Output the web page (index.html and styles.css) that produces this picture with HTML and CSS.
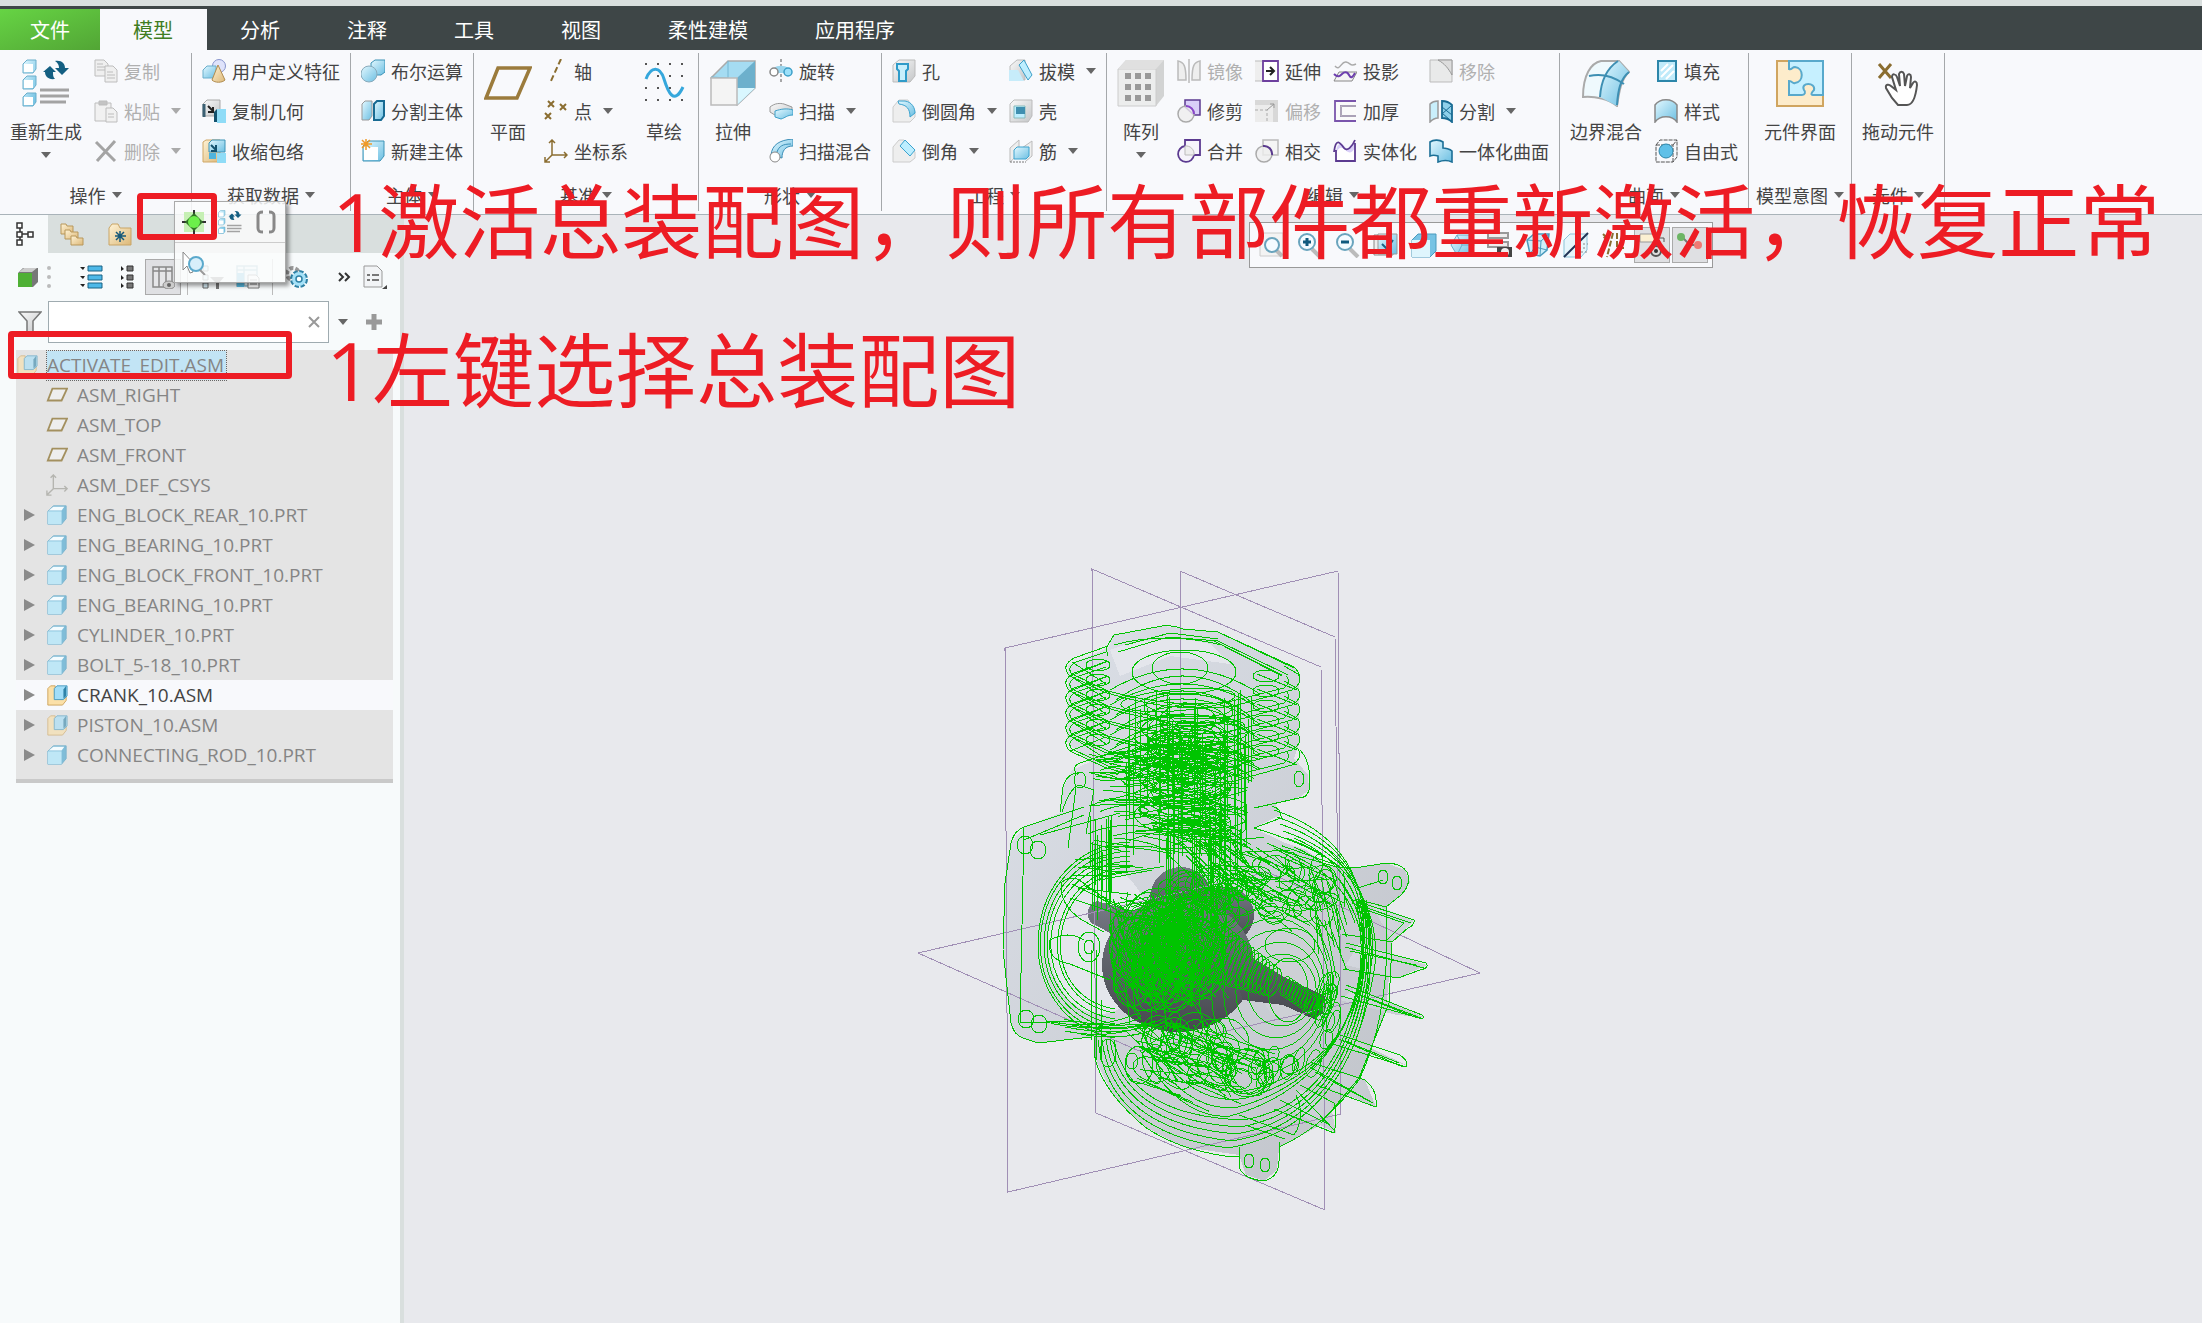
FILE: index.html
```html
<!DOCTYPE html>
<html lang="zh-CN">
<head>
<meta charset="utf-8">
<title>ACTIVATE_EDIT.ASM</title>
<link rel="stylesheet" href="styles.css">
</head>
<body>
<svg class="defs" aria-hidden="true">
<defs>
<linearGradient id="gb" x1="0" y1="0" x2="1" y2="1"><stop offset="0" stop-color="#e3f8ff"/><stop offset="1" stop-color="#6cbfe2"/></linearGradient>
<linearGradient id="gg" x1="0" y1="0" x2="1" y2="1"><stop offset="0" stop-color="#fafafa"/><stop offset="1" stop-color="#c4c6c8"/></linearGradient>
<linearGradient id="gy" x1="0" y1="0" x2="1" y2="1"><stop offset="0" stop-color="#fff3d6"/><stop offset="1" stop-color="#dcb878"/></linearGradient>
<linearGradient id="gm" x1="0" y1="0" x2="1" y2="1"><stop offset="0" stop-color="#dde1e9"/><stop offset="1" stop-color="#bfc2c8"/></linearGradient>
<linearGradient id="gk" x1="0" y1="0" x2="0" y2="1"><stop offset="0" stop-color="#777a86"/><stop offset="1" stop-color="#46484e"/></linearGradient>
</defs>
<symbol id="regen" viewBox="0 0 48 48"><g fill="url(#gb)" stroke="#6aaecb"><path d="M1 5l4-4h9v9l-3 4h-10zM1 21l4-4h9v9l-3 4h-10zM1 38l4-4h9v9l-3 4h-10z"/></g><g fill="#fff"><path d="M2 5h9v8h-9zM2 21h9v8h-9zM2 38h9v8h-9z"/></g><path d="M18 31h29M18 37h29M18 43h26" stroke="#a3a3a3" stroke-width="3"/><path d="M33 2c7-1 10 3 10 7h4l-7 7-7-7h4c0-3-1-5-4-7zM33 20c-7 1-10-3-10-7h-2l7-6 6 6h-3c0 3 0 5 2 7z" fill="#145f82"/></symbol>
<symbol id="copy" viewBox="0 0 24 24"><g fill="#efefef" stroke="#bdbdbd"><path d="M1 1h9l4 4v12h-13z"/><path d="M11 7h8l4 4v12h-12z"/></g><path d="M3 5h6M3 8h8M3 11h8M13 13h6M13 16h8M13 19h8" stroke="#bdbdbd"/></symbol>
<symbol id="paste" viewBox="0 0 24 24"><g fill="#f1f1f1" stroke="#bdbdbd"><path d="M1 4h16v18h-16z"/><path d="M5 2h8v4h-8z" fill="#c4c4c4"/><path d="M12 9h7l4 4v10h-11z"/></g><path d="M14 15h6M14 18h6" stroke="#bdbdbd"/></symbol>
<symbol id="del" viewBox="0 0 24 24"><path d="M2 3l19 19M21 2l-18 20" stroke="#a4a4a4" stroke-width="3"/></symbol>
<symbol id="udf" viewBox="0 0 24 24"><circle cx="17" cy="7" r="6.500" fill="#dfe3fb" stroke="#8794cc"/><path d="M1 11l4-4h9v10l-3 2h-10z" fill="url(#gb)" stroke="#6aaecb"/><path d="M16 6l7 15c-3 3-10 3-13 0z" fill="url(#gy)" stroke="#b08c50"/></symbol>
<symbol id="cgeo" viewBox="0 0 24 24"><path d="M1 5l4-4h13v12l-4 4h-13z" fill="url(#gg)" stroke="#aaa"/><path d="M2 5v13" stroke="#3b6073" stroke-width="3"/><path d="M6 7l5 5M11 8v5h-5" stroke="#222" fill="none" stroke-width="2"/><path d="M12 13l3-3v13h-3z" fill="#14526e"/><path d="M15 10h9v14h-9z" fill="#8fdcf7"/></symbol>
<symbol id="shrink" viewBox="0 0 24 24"><path d="M1 3l3-2h14v22h-17z" fill="url(#gy)" stroke="#cfa767"/><path d="M7 4l3-3h13v12h-16z" fill="url(#gb)" stroke="#3d93b6"/><path d="M9 6l5 5M14 6v6h-5" stroke="#14526e" fill="none" stroke-width="2"/><path d="M15 14h9v10h-9z" fill="#8fdcf7"/><path d="M7 14h7v6h-7z" fill="#4fb4dc"/></symbol>
<symbol id="bool" viewBox="0 0 24 24"><path d="M10 4l4-3h10v12l-4 3h-10z" fill="url(#gb)" stroke="#3d93b6"/><circle cx="8" cy="15" r="8" fill="url(#gb)" stroke="#8ab"/></symbol>
<symbol id="splitb" viewBox="0 0 24 24"><path d="M1 5l3-3h7v15l-3 4h-7z" fill="url(#gb)" stroke="#999"/><path d="M13 5l3-3h7v15l-3 4h-7z" fill="url(#gb)" stroke="#186a92" stroke-width="2"/></symbol>
<symbol id="newb" viewBox="0 0 24 24"><path d="M2 7l5-5h16v15l-4 5h-17z" fill="url(#gb)" stroke="#3d93b6"/><path d="M3 8h14v13h-14z" fill="#fff"/><path d="M5 0v11M0 5h11M1 1l8 8M9 1l-8 8" stroke="#f09a28" stroke-width="1.500"/></symbol>
<symbol id="plane" viewBox="0 0 48 48"><path d="M14 9h32l-13 30h-31z" fill="none" stroke="#9b7b3c" stroke-width="3.500"/></symbol>
<symbol id="axis" viewBox="0 0 24 24"><path d="M17 0l-11 24" stroke="#8a6d30" stroke-width="2" stroke-dasharray="6 3"/></symbol>
<symbol id="point" viewBox="0 0 24 24"><path d="M4 2l6 6M10 2l-6 6M16 5l6 6M22 5l-6 6M1 14l6 6M7 14l-6 6" stroke="#8a6d30" stroke-width="2"/></symbol>
<symbol id="csys" viewBox="0 0 24 24"><path d="M8 1v15h15M8 16l-7 7M5 4l3-3 3 3M20 13l3 3-3 3M1 18v5h5" fill="none" stroke="currentColor" stroke-width="1.500"/></symbol>
<symbol id="sketch" viewBox="0 0 48 48"><path d="M5 5h2M17 5h2M29 5h2M41 5h2M17 17h2M29 17h2M41 17h2M5 29h2M17 29h2M29 29h2M5 41h2M17 41h2M29 41h2M41 41h2" stroke="#555" stroke-width="2"/><path d="M6 20c5-13 14-13 18 0s10 27 19 8" fill="none" stroke="#35a7dc" stroke-width="3"/></symbol>
<symbol id="extrude" viewBox="0 0 48 48"><path d="M2 19l17-17h27v27l-18 17z" fill="#a5dcf2" stroke="#aaa" stroke-width="1.500"/><path d="M28 19l18-17v27l-18 17z" fill="#6db0cc"/><path d="M28 46l18-17h-18z" fill="#d9f7ff"/><path d="M19 2v17M19 19l-17-1" stroke="#75b6d2"/><path d="M2 19h26v27h-26z" fill="#f4f4f4" stroke="#bbb" stroke-width="1.500"/></symbol>
<symbol id="revolve" viewBox="0 0 24 24"><path d="M12 0v24" stroke="#555" stroke-dasharray="3 2"/><path d="M5 9c3-3 11-3 14 0v5h-14z" fill="#9bd6ee"/><circle cx="5" cy="13" r="4" fill="#fff" stroke="#888" stroke-width="1.500"/><circle cx="19" cy="13" r="4" fill="#9be0fa" stroke="#3c9fc8" stroke-width="1.500"/></symbol>
<symbol id="sweep" viewBox="0 0 24 24"><path d="M1 8c5-4 10-4 14-3l8 3v4c-7-1-9 1-9 4l-5 2-8-5z" fill="url(#gg)" stroke="#999"/><path d="M6 12c6-2 12-3 18-1v5c-6 0-8 3-12 4l-6-2z" fill="url(#gb)" stroke="#3c9fc8"/></symbol>
<symbol id="swblend" viewBox="0 0 24 24"><path d="M2 16c1-10 8-15 22-16v7c-8 0-11 5-11 12z" fill="url(#gb)" stroke="#3c8fb8"/><circle cx="6" cy="18" r="5" fill="#fff" stroke="#888"/><path d="M8 13c2-6 6-8 14-8" stroke="#3c8fb8" fill="none"/></symbol>
<symbol id="hole" viewBox="0 0 24 24"><path d="M1 6l6-5h16v16l-5 6h-17z" fill="url(#gg)" stroke="#bbb"/><path d="M5 5h11v5l-2 2v10h-7v-10l-2-2z" fill="#c8effc" stroke="#2f9bc9" stroke-width="2"/></symbol>
<symbol id="round" viewBox="0 0 24 24"><path d="M1 8l6-7h9l7 12v5l-5 5h-17z" fill="#eee" stroke="#ccc"/><path d="M6 2h7c7 1 10 7 10 12l-5 4c0-8-3-12-11-13z" fill="url(#gb)" stroke="#3ca3cf"/></symbol>
<symbol id="chamfer" viewBox="0 0 24 24"><path d="M1 8l6-7h5l11 12v6l-5 4h-17z" fill="#eee" stroke="#ccc"/><path d="M13 1l10 10-5 6-10-10z" fill="#bdeeff" stroke="#3ca3cf"/></symbol>
<symbol id="draft" viewBox="0 0 24 24"><path d="M1 7l7-6h8v20h-15z" fill="url(#gg)" stroke="#bbb"/><path d="M0 11h9l6 11h-15z" fill="#c7ecfa"/><path d="M15 1l8 15-4 5-9-15z" fill="#bdeeff" stroke="#3c9fc8"/></symbol>
<symbol id="shell" viewBox="0 0 24 24"><path d="M1 5l4-4h18v16l-4 6h-18z" fill="url(#gg)" stroke="#bbb"/><path d="M5 7h11v12h-11z" fill="#bdeeff" stroke="#8bb"/><path d="M7 8h9v7h-9z" fill="#3f8fb0"/></symbol>
<symbol id="rib" viewBox="0 0 24 24"><path d="M1 9l9-8v14l-9 8zM13 9l10-7v15l-6 5" fill="#eee" stroke="#bbb"/><path d="M5 11l3-3h12v9l-3 3h-12z" fill="url(#gb)" stroke="#3ca3cf"/><path d="M1 23h16" stroke="#777" stroke-dasharray="2 1"/></symbol>
<symbol id="pattern" viewBox="0 0 48 48"><path d="M1 10l8-9h38v36l-8 10h-38z" fill="#d2d3d3"/><path d="M1 10h38v37h-38z" fill="#eceded" stroke="#ccc"/><path d="M1 10l8-9h38l-8 9z" fill="#e0e0e0"/><g fill="#999"><path d="M8 14h6v6h-6zM18 14h6v6h-6zM28 14h6v6h-6zM8 25h6v6h-6zM18 25h6v6h-6zM28 25h6v6h-6zM8 36h6v6h-6zM18 36h6v6h-6zM28 36h6v6h-6z"/></g></symbol>
<symbol id="mirror" viewBox="0 0 24 24"><path d="M1 2c6 1 8 5 8 19h-8zM23 2c-6 1-8 5-8 19h8zM12 0v24" fill="#eee" stroke="#bbb" stroke-width="1.500"/></symbol>
<symbol id="trim" viewBox="0 0 24 24"><path d="M8 1h15v15h-6l-9-8z" fill="#d9cff8" stroke="#5b3a90" stroke-width="1.500"/><circle cx="9" cy="15" r="8" fill="#eeec" stroke="#aaa" stroke-width="1.500"/><path d="M9 7a8 8 0 0 1 8 8" fill="none" stroke="#8a45cc" stroke-width="2"/></symbol>
<symbol id="merge" viewBox="0 0 24 24"><path d="M8 8v-7h15v15h-6a8 8 0 1 1-9-9z" fill="#f6f4fb" stroke="#5b3a90" stroke-width="1.800"/><path d="M8 7v9h9a8 8 0 0 0-9-9z" fill="#eee" stroke="#bbb"/></symbol>
<symbol id="extend" viewBox="0 0 24 24"><path d="M0 2h8v20h-8" fill="#eee" stroke="#bbb"/><path d="M8 2h15v20h-15z" fill="#fff" stroke="#6d3f9e" stroke-width="1.800"/><path d="M11 12h8M15 8l4 4-4 4" fill="none" stroke="#222" stroke-width="2"/></symbol>
<symbol id="offset" viewBox="0 0 24 24"><path d="M0 1h23v22h-23z" fill="#ececec"/><path d="M0 1h23v22h-5v-17h-18z" fill="#d8d8d8"/><path d="M0 11h12v12" fill="none" stroke="#aaa" stroke-dasharray="3 2"/><path d="M12 11l7-6M15 5h4v4" fill="none" stroke="#999"/></symbol>
<symbol id="inter" viewBox="0 0 24 24"><path d="M8 1h15v15h-15z" fill="#f5f5f5" stroke="#bbb" stroke-width="1.500"/><circle cx="9" cy="15" r="8" fill="#eeec" stroke="#aaa" stroke-width="1.500"/><path d="M8 7a8 8 0 0 1 9 9" fill="none" stroke="#5b3a90" stroke-width="2"/></symbol>
<symbol id="project" viewBox="0 0 24 24"><path d="M2 7c5 6 6-5 11-4s4 5 10 2" fill="none" stroke="#aaa" stroke-width="1.500"/><path d="M1 22h18l5-9h-18z" fill="#f5f5f5" stroke="#888"/><path d="M1 15c4 4 6 2 8 0s5-3 7 1 4 2 6-2" fill="none" stroke="#6d3fae" stroke-width="2"/></symbol>
<symbol id="thick" viewBox="0 0 24 24"><path d="M23 2h-21v20h21M23 7h-15v10h15" fill="#fafafa" stroke="#7a55ac" stroke-width="1.800"/><path d="M23 7h-15v10h15" fill="none" stroke="#bbb" stroke-width="1.500"/></symbol>
<symbol id="solid" viewBox="0 0 24 24"><path d="M3 22v-10c2-10 6-8 9-4s7 0 10-6v20z" fill="#fff"/><path d="M3 12c2-10 6-8 9-4s7 0 10-6v7c-5 8-8 3-11 1s-5-2-8 4z" fill="#d9cff8"/><path d="M1 13c2-16 7-8 10-4s8-1 11-8M3 11v11h19v-18" fill="none" stroke="#5b3a90" stroke-width="1.800"/></symbol>
<symbol id="remove" viewBox="0 0 24 24"><path d="M1 1h22v22h-22z" fill="#e9eaea" stroke="#bbb"/><path d="M9 1h14v15c-4-7-7-11-14-15z" fill="#ddd" stroke="#999"/></symbol>
<symbol id="split" viewBox="0 0 24 24"><path d="M1 5c3-3 5-3 8-3v17c-3 0-5 1-8 4z" fill="#c9effb" stroke="#999" stroke-width="1.500"/><path d="M13 2c5 0 7 1 10 4v17c-3-3-5-4-10-4z" fill="#8ed0ea" stroke="#186a92" stroke-width="1.800"/><path d="M13 8l10 8M13 14l8 7M22 7l-9 8" stroke="#186a92"/></symbol>
<symbol id="uni" viewBox="0 0 24 24"><path d="M1 3c3-2 9-3 13 0v6c2 0 7 1 9 3v11c-4-2-9-2-14 0v-6c-3-1-6-1-8 0z" fill="url(#gb)" stroke="#1b6f96" stroke-width="1.600"/></symbol>
<symbol id="boundary" viewBox="0 0 48 48"><path d="M1 38c0-22 8-34 18-36h18l10 11c-8 7-10 20-12 34-8-7-22-10-34-9z" fill="#eff9fd" stroke="#aaa" stroke-width="2"/><path d="M18 38c1-17 8-29 19-36l10 11c-9 7-11 22-12 34z" fill="url(#gb)"/><path d="M18 38c1-16 6-28 18-36M35 46c1-14 3-26 12-33M7 17c13-3 24 0 35 8" fill="none" stroke="#3d8fb3" stroke-width="2"/></symbol>
<symbol id="fill" viewBox="0 0 24 24"><path d="M4 2h18v20h-18z" fill="#bfeafa" stroke="#2c86aa" stroke-width="2"/><path d="M7 12l7-7M7 18l12-12M12 20l8-8" stroke="#fff" stroke-width="2"/></symbol>
<symbol id="style" viewBox="0 0 24 24"><path d="M1 6c5-7 17-7 22 0v17c-5-7-17-7-22 0z" fill="url(#gb)" stroke="#888" stroke-width="1.500"/></symbol>
<symbol id="free" viewBox="0 0 24 24"><path d="M2 6l4-5h17v17l-4 5h-17zM2 6h17v17M19 6l4-5" fill="none" stroke="#555" stroke-dasharray="4 1"/><circle cx="12" cy="12" r="7" fill="#5fc0e8" stroke="#2c86aa"/></symbol>
<symbol id="iface" viewBox="0 0 48 48"><path d="M1 2h46v45h-46z" fill="#fdeccb" stroke="#d0a560" stroke-width="2"/><path d="M13 2h34v34h-10c-3 0-1-3 1-5 2-8-14-8-10 0 2 2 1 5-2 5h-13v-14c4 0 3 3 6 2 9-1 9-15 0-16-3 0-3 3-6 2z" fill="#c6f0ff" stroke="#58a9cc" stroke-width="2"/></symbol>
<symbol id="drag" viewBox="0 0 48 48"><path d="M5 5l12 14M17 5l-12 14" stroke="#8a6d30" stroke-width="3"/><path d="M18 39l-6-10c-1-4 3-4 5-2l5 4-4-13c0-4 4-3 5 0l3 9-1-12c1-3 4-3 5 0l1 12 2-10c1-3 4-2 4 1l-1 11 3-5c2-3 4-1 4 2-1 9-3 20-10 20h-9z" fill="#fff" stroke="#555" stroke-width="2"/></symbol>
<symbol id="part" viewBox="0 0 24 24"><path d="M2 8l6-6h14v14l-5 6h-15z" fill="#80bdd8" stroke="#7db4cd"/><path d="M2 8h15v14h-15z" fill="#bfe7f6"/><path d="M3 7l5-4h12l-3 4z" fill="#f4fcff"/></symbol>
<symbol id="asm" viewBox="0 0 24 24"><path d="M2 5l3-3h5v12h12v4l-4 5h-16z" fill="#fbe0a8" stroke="#cda25a"/><path d="M9 5l3-3h11v11l-4 4h-10z" fill="#a2def8" stroke="#4598bd"/><path d="M19 6l3-4v11l-3 3z" fill="#2f83a8"/></symbol>
<symbol id="dplane" viewBox="0 0 24 24"><path d="M7 5h16l-6 13h-15z" fill="#eee" stroke="#a3905f" stroke-width="2"/></symbol>
<symbol id="mtree" viewBox="0 0 24 24"><path d="M5 1h5v5h-5zM5 10h5v5h-5zM5 18h5v5h-5zM16 10h5v5h-5zM8 6v4M8 15v3M10 12h6" fill="#fff" stroke="#333" stroke-width="1.500"/></symbol>
<symbol id="folders" viewBox="0 0 24 24"><g fill="url(#gy)" stroke="#b8975a"><path d="M1 2h5l1 2h6v8h-12z"/><path d="M5 8h5l1 2h7v7h-13z"/><path d="M11 14h5l1 2h6v7h-12z"/></g></symbol>
<symbol id="fav" viewBox="0 0 24 24"><path d="M1 6l3-4h6l2 4h11v17h-22z" fill="url(#gy)" stroke="#c9a566"/><path d="M12 9v11M7 14h11M8 10l8 8M16 10l-8 8" stroke="#17597a" stroke-width="1.500"/></symbol>
<symbol id="cube" viewBox="0 0 24 24"><path d="M2 8l5-5h15v14l-5 5h-15z" fill="#777"/><path d="M2 8h14v14h-14z" fill="#4fb035"/><path d="M3 7l5-4h13l-5 4z" fill="#ccc"/></symbol>
<symbol id="expand" viewBox="0 0 24 24"><path d="M9 1h14v5h-14zM9 10h14v5h-14zM9 18h14v5h-14z" fill="#4db8e8" stroke="#1b6284"/><path d="M1 2h5l-2 3zM1 11h5l-2 3zM1 19h5l-2 3z" fill="#222"/></symbol>
<symbol id="collapse" viewBox="0 0 24 24"><path d="M12 1h6v5h-6zM12 10h6v5h-6zM12 18h6v5h-6z" fill="#777" stroke="#333"/><path d="M6 1v5l3-2zM6 10v5l3-2zM6 18v5l3-2z" fill="#222"/></symbol>
<symbol id="cols" viewBox="0 0 24 24"><path d="M2 2h19v20h-19zM2 6h19M8 2v20M15 2v20" fill="#e5e6e8" stroke="#888" stroke-width="1.500"/><ellipse cx="18" cy="20" rx="6" ry="4" fill="#ccc" stroke="#888"/><circle cx="18" cy="20" r="2" fill="#666"/></symbol>
<symbol id="tfilter" viewBox="0 0 24 24"><path d="M3 1h5v5h-5zM3 10h5v5h-5zM3 18h5v5h-5z" fill="#d8eff8" stroke="#666"/><path d="M10 12h14l-5 6v6h-3v-6z" fill="#777"/></symbol>
<symbol id="colset" viewBox="0 0 24 24"><path d="M1 1h20v20h-20zM1 5h20M8 1v20" fill="#eaf6fb" stroke="#8bb6c8" stroke-width="1.500"/><path d="M1 8h7v14h-7z" fill="#56b7de"/><path d="M12 10h8l3 3v10h-11z" fill="#fff" stroke="#777"/><path d="M14 15h7M14 19h7" stroke="#777"/></symbol>
<symbol id="gear" viewBox="0 0 24 24"><circle cx="8" cy="9" r="6" fill="none" stroke="#999" stroke-width="4" stroke-dasharray="4 2"/><circle cx="14" cy="14" r="7" fill="#c8effc" stroke="#2f81a5" stroke-width="4" stroke-dasharray="4 1.500"/><circle cx="14" cy="14" r="7" fill="#a5e1f8"/><circle cx="14" cy="14" r="3" fill="#fff" stroke="#2f81a5" stroke-width="1.500"/></symbol>
<symbol id="more" viewBox="0 0 14 24"><path d="M2 8l4 4-4 4M8 8l4 4-4 4" fill="none" stroke="#333" stroke-width="2"/></symbol>
<symbol id="doc" viewBox="0 0 24 24"><path d="M1 1h13l5 5v16h-18z" fill="#f2f4f6" stroke="#999"/><path d="M4 10h3M4 15h3M9 10h7M9 15h7" stroke="#777" stroke-width="2"/><path d="M24 20v4h-5z" fill="#444"/></symbol>
<symbol id="funnel" viewBox="0 0 24 24"><path d="M1 2h22l-8 9v12h-6v-12z" fill="url(#gg)" stroke="#777" stroke-width="1.500"/></symbol>
<symbol id="activate" viewBox="0 0 24 24"><path d="M2 2h20v20h-20z" fill="#c6f0b4"/><path d="M12 0v24M0 12h24" stroke="#333" stroke-width="2"/><path d="M12 3l9 9-9 9-9-9z" fill="#2f7424"/><circle cx="12" cy="12" r="6" fill="#6cf04a"/></symbol>
<symbol id="bracket" viewBox="0 0 24 24"><path d="M9 2c-4 0-5 1-5 4v12c0 3 1 4 5 4M15 2c4 0 5 1 5 4v12c0 3-1 4-5 4" fill="none" stroke="#888" stroke-width="3"/></symbol>
<symbol id="pick" viewBox="0 0 24 24"><path d="M1 1l12 13h-5l3 7-3 1-3-7-4 4z" fill="#fff" stroke="#888"/><circle cx="14" cy="13" r="7" fill="#d8effa" stroke="#5ba9cc" stroke-width="2"/><path d="M18 19l5 5" stroke="#999" stroke-width="2"/></symbol>
<symbol id="lens" viewBox="0 0 26 26"><path d="M15 17l8 8" stroke="#bbb" stroke-width="4"/><circle cx="10" cy="10" r="8" fill="#f4fbff" stroke="#6aa4bd" stroke-width="2"/></symbol>
<symbol id="refit" viewBox="0 0 26 26"><path d="M1 1h23v23h-23z" fill="#f3f3f3" stroke="#ccc"/><path d="M17 18l6 6" stroke="#bbb" stroke-width="4"/><circle cx="13" cy="13" r="7" fill="#f4fbff" stroke="#6aa4bd" stroke-width="2"/></symbol>
<symbol id="repaint" viewBox="0 0 26 26"><path d="M1 3h19v20h-19z" fill="#eee" stroke="#888"/><path d="M5 2h19v20h-19z" fill="url(#gb)" stroke="#999"/><path d="M9 12l5 5 6-9" fill="none" stroke="#1b6284" stroke-width="2"/></symbol>
<symbol id="view" viewBox="0 0 26 26"><path d="M1 8l6-6h18v17l-6 6h-18z" fill="#77c3e4" stroke="#4a9abd"/><path d="M1 8h18v17h-18z" fill="#dff5fd"/></symbol>
<symbol id="orient" viewBox="0 0 26 26"><path d="M8 3h12l5 10-5 10h-12l-6-10z" fill="url(#gb)" stroke="#6aaecb"/><path d="M8 3l5 10-5 10M13 13h12" stroke="#6aaecb" fill="none"/></symbol>
<symbol id="persp" viewBox="0 0 26 26"><path d="M2 8l7-6h15l-2 16-7 6-10-2z" fill="#cdeefa" stroke="#4a9abd" stroke-width="1.500"/><path d="M2 8l14 1 8-7M16 9l-1 15M9 2l1 13 12 3M10 15l-5 7" fill="none" stroke="#4a9abd"/></symbol>
<symbol id="cam" viewBox="0 0 26 26"><path d="M1 1h20v5h-20zM1 10h20v5h-20z" fill="#eee" stroke="#999" stroke-width="2"/><path d="M10 15h15v10h-15z" fill="#444"/><circle cx="18" cy="20" r="4" fill="#eee"/></symbol>
<symbol id="sect" viewBox="0 0 26 26"><path d="M1 8l6-6h17v16l-6 7h-17z" fill="#e6f6fb" stroke="#8bc2d8"/><path d="M1 25l24-24" stroke="#235" stroke-width="2"/><path d="M14 20h10M16 16h8M20 12h5" stroke="#888" stroke-dasharray="2 2"/></symbol>
<symbol id="datum" viewBox="0 0 26 26"><path d="M2 2l5 5M7 2l-5 5M12 1l-6 24M16 1v15h8" stroke="#8a6d30" stroke-width="2" fill="none" stroke-dasharray="6 2"/></symbol>
<symbol id="anno" viewBox="0 0 26 26"><path d="M1 2h17v8h-17z" fill="#fbf0d2" stroke="#999"/><path d="M18 6h7v4" stroke="#555" fill="none"/><circle cx="17" cy="19" r="5" fill="#ddd" stroke="#555" stroke-width="2"/><circle cx="17" cy="19" r="2" fill="#333"/></symbol>
<symbol id="spin" viewBox="0 0 26 26"><path d="M13 13l-8-8M13 13h9M13 13l-7 9" stroke="#777" stroke-width="2"/><circle cx="4" cy="5" r="4" fill="#6db565"/><circle cx="21" cy="13" r="4" fill="#ef7a74"/></symbol>
</svg>

<div class="app">
<div class="titlebar"></div>
<nav class="tabs">
<button class="tab file">文件</button><button class="tab active">模型</button><button class="tab">分析</button><button class="tab">注释</button><button class="tab">工具</button><button class="tab">视图</button><button class="tab">柔性建模</button><button class="tab">应用程序</button>
</nav>

<header class="ribbon">
<section class="group"><div class="tools">
<button class="big"><svg><use href="#regen"/></svg><span>重新生成</span><i class="arr"></i></button>
<div class="col">
<button class="cmd" disabled><svg><use href="#copy"/></svg>复制</button>
<button class="cmd" disabled><svg><use href="#paste"/></svg>粘贴<i class="arr"></i></button>
<button class="cmd" disabled><svg><use href="#del"/></svg>删除<i class="arr"></i></button>
</div></div><button class="name">操作<i class="arr"></i></button></section>

<section class="group"><div class="tools"><div class="col">
<button class="cmd"><svg><use href="#udf"/></svg>用户定义特征</button>
<button class="cmd"><svg><use href="#cgeo"/></svg>复制几何</button>
<button class="cmd"><svg><use href="#shrink"/></svg>收缩包络</button>
</div></div><button class="name">获取数据<i class="arr"></i></button></section>

<section class="group"><div class="tools"><div class="col">
<button class="cmd"><svg><use href="#bool"/></svg>布尔运算</button>
<button class="cmd"><svg><use href="#splitb"/></svg>分割主体</button>
<button class="cmd"><svg><use href="#newb"/></svg>新建主体</button>
</div></div><button class="name">主体<i class="arr"></i></button></section>

<section class="group"><div class="tools">
<button class="big"><svg><use href="#plane"/></svg><span>平面</span></button>
<div class="col">
<button class="cmd"><svg><use href="#axis"/></svg>轴</button>
<button class="cmd"><svg><use href="#point"/></svg>点<i class="arr"></i></button>
<button class="cmd"><svg class="gold"><use href="#csys"/></svg>坐标系</button>
</div>
<button class="big"><svg><use href="#sketch"/></svg><span>草绘</span></button>
</div><button class="name">基准<i class="arr"></i></button></section>

<section class="group"><div class="tools">
<button class="big"><svg><use href="#extrude"/></svg><span>拉伸</span></button>
<div class="col">
<button class="cmd"><svg><use href="#revolve"/></svg>旋转</button>
<button class="cmd"><svg><use href="#sweep"/></svg>扫描<i class="arr"></i></button>
<button class="cmd"><svg><use href="#swblend"/></svg>扫描混合</button>
</div></div><button class="name">形状<i class="arr"></i></button></section>

<section class="group"><div class="tools">
<div class="col">
<button class="cmd"><svg><use href="#hole"/></svg>孔</button>
<button class="cmd"><svg><use href="#round"/></svg>倒圆角<i class="arr"></i></button>
<button class="cmd"><svg><use href="#chamfer"/></svg>倒角<i class="arr"></i></button>
</div><div class="col">
<button class="cmd"><svg><use href="#draft"/></svg>拔模<i class="arr"></i></button>
<button class="cmd"><svg><use href="#shell"/></svg>壳</button>
<button class="cmd"><svg><use href="#rib"/></svg>筋<i class="arr"></i></button>
</div></div><button class="name">工程<i class="arr"></i></button></section>

<section class="group"><div class="tools">
<button class="big"><svg><use href="#pattern"/></svg><span>阵列</span><i class="arr"></i></button>
<div class="col">
<button class="cmd" disabled><svg><use href="#mirror"/></svg>镜像</button>
<button class="cmd"><svg><use href="#trim"/></svg>修剪</button>
<button class="cmd"><svg><use href="#merge"/></svg>合并</button>
</div><div class="col">
<button class="cmd"><svg><use href="#extend"/></svg>延伸</button>
<button class="cmd" disabled><svg><use href="#offset"/></svg>偏移</button>
<button class="cmd"><svg><use href="#inter"/></svg>相交</button>
</div><div class="col">
<button class="cmd"><svg><use href="#project"/></svg>投影</button>
<button class="cmd"><svg><use href="#thick"/></svg>加厚</button>
<button class="cmd"><svg><use href="#solid"/></svg>实体化</button>
</div><div class="col">
<button class="cmd" disabled><svg><use href="#remove"/></svg>移除</button>
<button class="cmd"><svg><use href="#split"/></svg>分割<i class="arr"></i></button>
<button class="cmd"><svg><use href="#uni"/></svg>一体化曲面</button>
</div></div><button class="name">编辑<i class="arr"></i></button></section>

<section class="group"><div class="tools">
<button class="big"><svg><use href="#boundary"/></svg><span>边界混合</span></button>
<div class="col">
<button class="cmd"><svg><use href="#fill"/></svg>填充</button>
<button class="cmd"><svg><use href="#style"/></svg>样式</button>
<button class="cmd"><svg><use href="#free"/></svg>自由式</button>
</div></div><button class="name">曲面<i class="arr"></i></button></section>

<section class="group"><div class="tools"><button class="big"><svg><use href="#iface"/></svg><span>元件界面</span></button></div><button class="name">模型意图<i class="arr"></i></button></section>
<section class="group"><div class="tools"><button class="big"><svg><use href="#drag"/></svg><span>拖动元件</span></button></div><button class="name">元件<i class="arr"></i></button></section>
</header>

<main class="work">
<aside class="panel">
<div class="ptabs"><button class="ptab on" aria-label="模型树"><svg><use href="#mtree"/></svg></button><button class="ptab" aria-label="文件夹浏览器"><svg><use href="#folders"/></svg></button><button class="ptab" aria-label="收藏夹"><svg><use href="#fav"/></svg></button></div>
<div class="ptools">
<button aria-label="模型"><svg><use href="#cube"/></svg></button><i class="dots"></i>
<button class="far" aria-label="展开"><svg><use href="#expand"/></svg></button>
<button aria-label="折叠"><svg><use href="#collapse"/></svg></button>
<button class="pressed" aria-label="显示列"><svg><use href="#cols"/></svg></button><i class="sep"></i>
<button aria-label="树过滤器"><svg><use href="#tfilter"/></svg></button>
<button aria-label="列设置"><svg><use href="#colset"/></svg></button><i class="sep"></i>
<button aria-label="设置"><svg><use href="#gear"/></svg></button>
<button class="far" aria-label="更多"><svg class="narrow"><use href="#more"/></svg></button>
<button aria-label="文档"><svg><use href="#doc"/></svg></button>
</div>
<div class="filter">
<svg><use href="#funnel"/></svg>
<div class="search"><input type="text" aria-label="过滤"><button aria-label="清除"><svg viewBox="0 0 12 12"><path d="M1 1l10 10M11 1l-10 10" stroke="#999" stroke-width="2"/></svg></button></div>
<button class="drop" aria-label="选项"><i class="arr"></i></button>
<button aria-label="添加"><svg class="plus" viewBox="0 0 16 16"><path d="M8 0v16M0 8h16" stroke="#999" stroke-width="5"/></svg></button>
</div>
<ul class="tree">
<li class="root"><svg class="dim"><use href="#asm"/></svg><span>ACTIVATE_EDIT.ASM</span></li>
<li><i></i><svg><use href="#dplane"/></svg>ASM_RIGHT</li>
<li><i></i><svg><use href="#dplane"/></svg>ASM_TOP</li>
<li><i></i><svg><use href="#dplane"/></svg>ASM_FRONT</li>
<li><i></i><svg class="grey"><use href="#csys"/></svg>ASM_DEF_CSYS</li>
<li><i class="exp"></i><svg><use href="#part"/></svg>ENG_BLOCK_REAR_10.PRT</li>
<li><i class="exp"></i><svg><use href="#part"/></svg>ENG_BEARING_10.PRT</li>
<li><i class="exp"></i><svg><use href="#part"/></svg>ENG_BLOCK_FRONT_10.PRT</li>
<li><i class="exp"></i><svg><use href="#part"/></svg>ENG_BEARING_10.PRT</li>
<li><i class="exp"></i><svg><use href="#part"/></svg>CYLINDER_10.PRT</li>
<li><i class="exp"></i><svg><use href="#part"/></svg>BOLT_5-18_10.PRT</li>
<li class="current"><i class="exp"></i><svg><use href="#asm"/></svg>CRANK_10.ASM</li>
<li><i class="exp"></i><svg class="dim"><use href="#asm"/></svg>PISTON_10.ASM</li>
<li><i class="exp"></i><svg><use href="#part"/></svg>CONNECTING_ROD_10.PRT</li>
</ul>
</aside>

<div class="viewport">
<svg class="scene" viewBox="404 215 1798 1108">
<g fill="url(#gm)">
<path d="M1068 665L1108 648 1114 635 1162 626 1218 632 1294 667 1299 675V745L1294 758 1308 775 1309 790 1300 797 1275 803 1280 815 1254 828 1283 842 1306 850 1327 865 1340 867 1355 868 1386 863 1405 870 1410 882 1401 895 1386 907 1392 943 1386 1010 1359 1080 1321 1125 1279 1147 1277 1170 1264 1181 1246 1175 1239 1155 1183 1147 1145 1127 1114 1097 1097 1063 1095 1037 1038 1043 1019 1037 1011 1023 1003 950 1005 883 1011 843 1024 827 1060 813 1062 790 1072 770 1090 762 1067 742z"/>
<path d="M1371 903L1414 921 1392 942zM1359 943L1427 965 1398 978 1346 965zM1355 988L1424 1017 1397 1015 1340 1000zM1348 1037L1406 1065 1340 1045zM1317 1067L1365 1080 1376 1107 1317 1083zM1300 1090L1330 1100 1336 1133 1290 1110z"/>
</g>
<g fill="#e4e6ec"><ellipse cx="1100" cy="940" rx="52" ry="74"/><ellipse cx="1290" cy="960" rx="36" ry="62" fill="#cdd0d5"/><path d="M1110 650c30-12 70-14 100-6l20 20-60-8-50 20z"/></g>
<g fill="url(#gk)"><circle cx="1181" cy="898" r="31"/><circle cx="1226" cy="915" r="28"/><ellipse cx="1178" cy="965" rx="76" ry="67"/><path d="M1097 901c-10 2-13 17-4 23l50 26 20-30zM1222 940l64 38 39 18v15l-11 8-31-14-40-5z"/></g>
<g class="planes">
<path d="M1005 648L1338 571 1341 1114 1008 1192z"/><path d="M1092 569L1321 667 1325 1210 1096 1113z"/><path d="M1180 571L1335 637 1338 900M1180 571V850"/><path d="M918 953L1268 872 1480 973 1139 1051z"/>
</g>
<g class="wire" id="wire">
<path d="M1108 656l-2-8 8-13 48-9q12-1 21 3l35 3 76 35q7 6 5 14M1118 652l50-15 50 4 70 34M1125 645l45-12 48 6M1011 843q3-12 13-16l60-20M1005 883l6-40M1005 883l-2 67 8 73q3 12 12 15l15 5 53-6M1024 827l-4 196M1060 812l3-25q4-14 16-14M1020 1023l60-2M1040 835l80-22M1024 840l60-25M1062 812q10-30 20-26l12 4-8 44M1068 848l8-60M1078 775q-8-8 2-12l60-20"/>
<path d="M1095 1037q-2 18 2 28 10 30 48 62 32 22 80 29h15M1279 1147q45-20 80-67 33-68 27-173M1254 828q60 18 86 39l15 1 31-5q15 0 21 9 5 12-6 23l-15 12M1239 1147v20q4 12 25 14 15-4 15-20v-19M1300 750q12 12 9 40-2 8-10 8l-45 10M1272 806q10 3 9 12l-27 10"/>
<ellipse cx="1025" cy="845" rx="8" ry="9"/><ellipse cx="1038" cy="850" rx="8" ry="9"/><ellipse cx="1026" cy="1019" rx="8" ry="9"/><ellipse cx="1039" cy="1024" rx="8" ry="9"/>
<ellipse cx="1383" cy="877" rx="5" ry="7"/><ellipse cx="1397" cy="883" rx="5" ry="7"/><ellipse cx="1249" cy="1161" rx="5" ry="7"/><ellipse cx="1265" cy="1165" rx="5" ry="7"/><ellipse cx="1299" cy="779" rx="5" ry="8"/><ellipse cx="1080" cy="780" rx="6" ry="8"/>
<ellipse cx="1139" cy="1065" rx="14" ry="19"/><ellipse cx="1132" cy="1061" rx="6" ry="8"/><ellipse cx="1108" cy="1053" rx="8" ry="14"/><ellipse cx="1089" cy="947" rx="11" ry="15"/><ellipse cx="1089" cy="947" rx="5" ry="7"/>
<path d="M1062 882q-4 22 20 38l22 12M1062 882q10-8 20 0l30 22M1050 940q-4 20 20 24l40 16M1050 940q18-10 34 0"/>
<path d="M1353 900l61 20q1 5-6 8l-16 14-50-8M1358 907l46 16-18 18M1346 943l80 20q4 5-6 7l-22 8-55-9M1350 951l66 14M1346 985l76 30q4 4-3 3l-78-22M1352 992l60 24M1340 1035l60 20q9 6 6 12l-76-24M1345 1041l54 22M1310 1062l55 18q13 10 11 27l-60-22M1315 1072l56 30M1300 1085l34 18q4 16 0 30l-60-24M1280 1100l50 25M1239 1115l55 20q12-18 2-40M1245 1125l40 14"/>
<path d="M1352 903l59 20M1345 947l79 21M1345 989l76 29M1339 1039l64 28M1310 1067l63 36M1296 1090l38 40M1358 888l25-8M1386 907l-30-8M1392 943l-3 60-30 75-38 45"/>
<ellipse cx="1290" cy="945" rx="25" ry="17"/><ellipse cx="1288" cy="990" rx="20" ry="32"/>
</g>
</svg>
<div class="viewbar">
<button aria-label="重新调整"><svg><use href="#refit"/></svg></button>
<button aria-label="放大"><svg><use href="#lens"/><path d="M6 10h8M10 6v8" stroke="#115a7e" stroke-width="3"/></svg></button>
<button aria-label="缩小"><svg><use href="#lens"/><path d="M6 10h8" stroke="#115a7e" stroke-width="3"/></svg></button>
<button aria-label="重画"><svg><use href="#repaint"/></svg></button>
<button aria-label="显示样式"><svg><use href="#view"/></svg></button>
<button aria-label="已保存方向"><svg><use href="#orient"/></svg></button>
<button aria-label="视图管理器"><svg><use href="#cam"/></svg></button>
<button aria-label="透视图"><svg><use href="#persp"/></svg></button>
<button aria-label="截面"><svg><use href="#sect"/></svg></button>
<button aria-label="基准显示"><svg><use href="#datum"/></svg></button>
<button class="pressed" aria-label="注释显示"><svg><use href="#anno"/></svg></button>
<button class="pressed" aria-label="旋转中心"><svg><use href="#spin"/></svg></button>
</div>
</div>
</main>
</div>

<div class="mini">
<div class="mrow"><button aria-label="激活"><svg><use href="#activate"/></svg></button><button aria-label="重新生成"><svg><use href="#regen"/></svg></button><button aria-label="括号"><svg><use href="#bracket"/></svg></button></div>
<div class="mrow"><button aria-label="选择"><svg><use href="#pick"/></svg></button></div>
</div>
<div class="mark mark-activate"></div>
<div class="mark mark-root"></div>
<p class="note note-activate">1激活总装配图，则所有部件都重新激活，恢复正常</p>
<p class="note note-root">1左键选择总装配图</p>
<script src="model.js"></script>
</body>
</html>
```
FILE: styles.css
```css
* { box-sizing: border-box; }
body {
  margin: 0;
  position: relative;
  overflow: hidden;
  background: #e8e9ed;
  color: #444;
  font: 18px/24px "Noto Sans CJK SC", sans-serif;
}
button {
  border: 0;
  padding: 0;
  background: none;
  color: inherit;
  font: inherit;
  white-space: nowrap;
}
svg { display: block; flex: none; }
.defs { position: absolute; width: 0; height: 0; }
.app { display: flex; flex-direction: column; min-height: 100vh; }
.titlebar { height: 6px; background: #d9dfde; }

.tabs { display: flex; height: 44px; padding-top: 3px; background: #3e4647; }
.tab { padding: 0 34px 0 33px; color: #fff; font-size: 20px; }
.tab.file { padding: 0 30px; background: linear-gradient(160deg, #66d444, #52a535); }
.tab.active { background: #f8f9fc; color: #3f7d22; }

.ribbon {
  display: flex;
  height: 165px;
  background: #f8f9fc;
  border-bottom: 1px solid #a9b3b9;
}
.group {
  display: flex;
  flex-direction: column;
  justify-content: space-between;
  align-items: center;
  margin: 3px 0;
  padding: 6px 0 4px;
  border-right: 1px solid #a5a8ab;
}
.tools { display: flex; gap: 12px; padding: 0 10px; }
.col { display: flex; flex-direction: column; gap: 16px; align-items: flex-start; }
.cmd { display: flex; align-items: center; height: 24px; gap: 6px; }
.cmd svg { width: 24px; height: 24px; }
.cmd .arr { margin-left: 5px; }
.cmd:disabled { color: #b0b0b0; }
.cmd:disabled .arr { border-top-color: #aaa; }
.arr {
  width: 10px;
  height: 6px;
  border: 5px solid transparent;
  border-top: 6px solid #666;
  border-bottom: 0;
}
.big { display: flex; flex-direction: column; align-items: center; min-width: 48px; }
.big svg { width: 48px; height: 48px; margin-bottom: 12px; }
.big .arr { margin-top: 9px; }
.name { display: flex; align-items: center; gap: 6px; height: 24px; margin: 0 7px; }
.gold { color: #8a6d30; }
.grey { color: #b5b5b0; }
.dim { opacity: .6; }

.work { display: flex; flex: 1; }
.panel {
  flex: none;
  width: 404px;
  border-right: 4px solid #d9dfde;
  background: #f7fafb;
}
.ptabs { display: flex; height: 38px; background: #d9dfde; }
.ptab { display: grid; place-items: center; width: 48px; }
.ptab.on { background: #f7fafb; }
.ptab svg, .ptools svg, .filter > svg { width: 24px; height: 24px; }
.ptools { display: flex; align-items: center; gap: 12px; height: 48px; padding-left: 16px; }
.ptools .narrow { width: 14px; }
.ptools .far { margin-left: 16px; }
.dots { width: 4px; height: 22px; margin-left: -5px; border-left: 4px dotted #bbb; }
.sep { width: 1px; height: 36px; background: #bbb; }
.ptools .pressed { margin: 0 -6px; }
.pressed {
  display: grid;
  place-items: center;
  width: 36px;
  height: 36px;
  border: 1px solid #aaa;
  background: #dfe0e3;
}
.filter { display: flex; align-items: center; height: 42px; padding-left: 18px; gap: 6px; }
.search {
  display: flex;
  align-items: center;
  width: 281px;
  height: 42px;
  padding-right: 8px;
  border: 1px solid #9fabb0;
  background: #fff;
}
.search input { flex: 1; min-width: 0; height: 36px; border: 0; outline: 0; font: inherit; }
.search svg { width: 12px; height: 12px; }
.drop { display: grid; padding: 0 12px 0 3px; }
.plus { width: 16px; height: 16px; }

.tree {
  margin: 7px 7px 0 16px;
  padding: 0 0 9px;
  list-style: none;
  background: #e4e4e4;
  border-bottom: 4px solid #c9c9c9;
  color: #858585;
  font: 19px/30px "Open Sans", sans-serif;
}
.tree li {
  display: grid;
  grid-template-columns: 22px 31px 1fr;
  align-items: center;
  height: 30px;
  padding-left: 8px;
}
.tree li svg { width: 22px; height: 22px; }
.tree li.root { display: flex; padding: 0; gap: 9px; }
.root span { height: 29px; padding-right: 2px; background: #c2e4f5; outline: 1px dotted #666; line-height: 28px; }
.tree li.current { background: #f8f9fc; color: #444; }
.exp {
  width: 11px;
  height: 12px;
  border: 6px solid transparent;
  border-left: 11px solid #8b8b8b;
  border-right: 0;
}

.viewport { position: relative; flex: 1; min-width: 0; }
.scene { position: absolute; inset: 0; width: 100%; height: 100%; shape-rendering: crispEdges; }
.wire { fill: none; stroke: #00c400; stroke-width: 1; }
.planes { fill: none; stroke: #a08fb5; stroke-width: 1; }
.viewbar {
  position: absolute;
  left: 47%;
  top: 7px;
  display: flex;
  align-items: center;
  gap: 2px;
  height: 46px;
  padding: 0 4px;
  border: 1px solid #999;
  background: #f8f9fc;
}
.viewbar button { display: grid; place-items: center; width: 36px; height: 36px; }
.viewbar svg { width: 26px; height: 26px; }

.mini {
  position: absolute;
  left: 174px;
  top: 201px;
  width: 112px;
  border: 1px solid #aaa;
  background: rgba(250, 251, 252, .85);
  box-shadow: 3px 3px 4px rgba(0, 0, 0, .4);
}
.mrow { display: flex; align-items: center; gap: 12px; height: 40px; padding-left: 7px; }
.mrow + .mrow { border-top: 1px solid #ccc; }
.mini svg { width: 24px; height: 24px; }
.mark { position: absolute; border: 6px solid #ed1c24; border-radius: 4px; }
.mark-activate { left: 137px; top: 193px; width: 80px; height: 47px; }
.mark-root { left: 8px; top: 331px; width: 284px; height: 48px; }
.note {
  position: absolute;
  margin: 0;
  color: #ed1c24;
  font: 81px/100px "Open Sans", "Noto Sans CJK SC", sans-serif;
  white-space: nowrap;
}
.note-activate { left: 332px; top: 171px; }
.note-root { left: 326px; top: 320px; }
```
FILE: model.js
```js
// Adds the repeated wireframe edges of the engine: fins, bores, flanges and crank rings.
(function () {
  var wire = document.getElementById('wire');
  var seed = 7;
  function rnd(a, b) {
    seed = (seed * 16807) % 2147483647;
    return a + (b - a) * seed / 2147483647;
  }
  function add(name, attrs) {
    var el = document.createElementNS('http://www.w3.org/2000/svg', name);
    for (var k in attrs) el.setAttribute(k, attrs[k]);
    wire.appendChild(el);
  }
  function path(d) { add('path', { d: d }); }
  function ring(cx, cy, rx, ry, rot) {
    add('ellipse', { cx: cx, cy: cy, rx: rx, ry: ry, transform: 'rotate(' + (rot || 0) + ' ' + cx + ' ' + cy + ')' });
  }
  var i, x, y;

  // Cooling fins
  for (i = 0; i < 6; i++) {
    y = i * 15;
    path('M1108 ' + (646 + y) + 'l-34 12q-14 8-4 18l34 16q70 22 130 14l58-16q12-8 6-16l-14-8');
    path('M1106 ' + (652 + y) + 'l-30 10q-10 6-4 12l36 17q66 18 120 11l56-14q8-6 2-12');
    path('M1070 ' + (676 + y) + 'l36-14M1297 ' + (690 + y) + 'l-40-16M1072 ' + (662 + y) + 'l34 22');
    ring(1098, 665 + y, 12, 6);
    ring(1266, 676 + y, 13, 6);
    path('M1110 ' + (690 + y) + 'q76-44 150 4');
    path('M1116 ' + (700 + y) + 'q70-50 138 4');
  }
  path('M1218 632l76 36M1212 640l70 36M1114 645q50-14 108 0l60 30');
  ring(1184, 672, 52, 22);
  ring(1180, 668, 28, 16);
  // Bore and piston
  for (i = 0; i < 26; i++) {
    ring(rnd(1178, 1192), 700 + i * 5, rnd(26, 60), rnd(7, 20), rnd(-8, 8));
  }
  for (i = 0; i < 26; i++) ring(rnd(1160, 1210), rnd(735, 780), rnd(8, 22), rnd(8, 20), rnd(-20, 20));
  for (i = 0; i < 44; i++) {
    x = rnd(1112, 1252);
    y = rnd(690, 770);
    path('M' + x + ' ' + y + 'v' + rnd(60, 120));
  }
  for (i = 0; i < 110; i++) {
    path('M' + rnd(1088, 1190) + ' ' + rnd(750, 850) + 'q' + rnd(20, 40) + ' ' + rnd(-16, 10) + ' ' + rnd(40, 75) + ' ' + rnd(-14, 20));
  }
  for (i = 0; i < 30; i++) path('M' + rnd(1165, 1250) + ' ' + rnd(800, 840) + 'v' + rnd(30, 90));
  for (i = 0; i < 30; i++) path('M' + rnd(1160, 1220) + ' ' + rnd(810, 860) + 'l' + rnd(20, 60) + ' ' + rnd(10, 50));
  // Rear flange
  [[82, 98], [79, 94], [74, 89], [70, 84], [65, 79], [56, 73], [52, 69]].forEach(function (r) {
    path('M1130 ' + (940 - r[1]) + 'C' + (1100 - r[0]) + ' ' + (940 - r[1] * 0.95) + ' ' + (1085 - r[0]) + ' ' + (940 + r[1] * 0.8) + ' 1115 ' + (940 + r[1]));
  });
  for (i = 0; i < 16; i++) path('M' + rnd(1085, 1112) + ' ' + rnd(810, 860) + 'v' + rnd(30, 90));
  path('M1091 950v90M1096 950v110M1101 1000v60');
  for (i = 0; i < 14; i++) path('M' + rnd(1070, 1110) + ' ' + rnd(840, 900) + 'l' + rnd(30, 60) + ' ' + rnd(-10, 30));
  for (i = 0; i < 8; i++) path('M' + rnd(1040, 1080) + ' ' + rnd(1018, 1034) + 'q50 10 90 ' + rnd(-12, 4));
  // Front housing
  for (i = 0; i < 5; i++) {
    path('M' + (1098 + i * 4) + ' 1040q' + (10 + i) + ' ' + (92 - i * 4) + ' 130 ' + (108 - i * 7) + 'q' + (125 - i * 3) + '-20 ' + (148 - i * 7) + '-190q0-90-90-120');
  }
  for (i = 0; i < 4; i++) path('M' + (1140 + i * 8) + ' 1050q40 ' + (70 - i * 6) + ' 90 ' + (66 - i * 9) + 'q110-30 ' + (134 - i * 8) + '-150q0-80-70-110');
  for (i = 0; i < 5; i++) ring(1266 + i * 4, 990, 66 - i * 8, 84 - i * 12, 10);
  for (i = 0; i < 34; i++) ring(rnd(1150, 1250), rnd(1025, 1080), rnd(6, 24), rnd(8, 24), rnd(-50, 50));
  for (i = 0; i < 26; i++) ring(rnd(1240, 1325), rnd(860, 920), rnd(5, 18), rnd(5, 14), rnd(-40, 40));
  for (i = 0; i < 46; i++) {
    path('M' + rnd(1125, 1220) + ' ' + rnd(1020, 1085) + 'l' + rnd(10, 70) + ' ' + rnd(5, 32));
    path('M' + rnd(1200, 1290) + ' ' + rnd(840, 900) + 'l' + rnd(20, 60) + ' ' + rnd(-5, 35));
  }
  for (i = 0; i < 20; i++) path('M' + rnd(1310, 1345) + ' ' + rnd(865, 930) + 'l' + rnd(0, 20) + ' ' + rnd(20, 60));
  for (i = 0; i < 6; i++) path('M' + (1356 + i * 2) + ' 900q14 70-10 ' + (120 + i * 4));
  for (i = 0; i < 14; i++) ring(1335 - rnd(0, 12), rnd(980, 1040), 6, rnd(8, 20), 15);
  for (i = 0; i < 14; i++) ring(rnd(1255, 1315), rnd(1050, 1085), rnd(5, 9), rnd(8, 16), 15);
  // Crank webs, journals and shaft
  for (i = 0; i < 80; i++) {
    ring(rnd(1135, 1200), rnd(925, 975), rnd(6, 34), rnd(20, 48), rnd(-10, 35));
  }
  for (i = 0; i < 44; i++) ring(rnd(1165, 1232), rnd(880, 925), rnd(5, 20), rnd(6, 22), rnd(-30, 30));
  for (i = 0; i < 18; i++) ring(1205 + i * 4, 948 + i * 2, 7, 32 - i, 20);
  for (i = 0; i < 12; i++) ring(1285 + i * 3, 986 + i * 2, 4, 10, 20);
  for (i = 0; i < 110; i++) {
    path('M' + rnd(1108, 1200) + ' ' + rnd(890, 990) + 'l' + rnd(-6, 34) + ' ' + rnd(10, 46));
  }
  for (i = 0; i < 40; i++) {
    path('M' + rnd(1110, 1210) + ' ' + rnd(900, 990) + 'l' + rnd(10, 40) + ' ' + rnd(-24, 10));
  }
})();
```
